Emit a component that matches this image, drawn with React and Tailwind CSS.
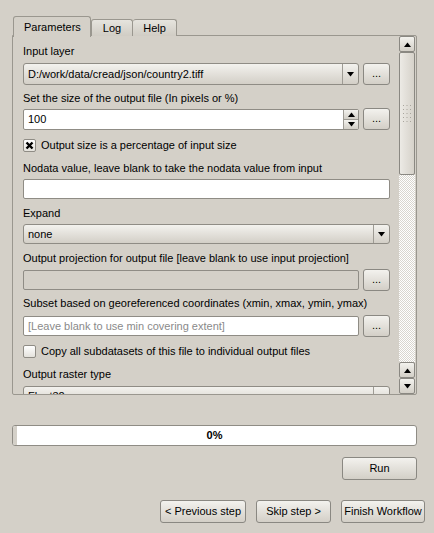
import React from "react";

const btnGrad = "bg-gradient-to-b from-[#f3f2ee] to-[#d3cfc7]";

function DownArrow() {
  return (
    <svg width="9" height="5" viewBox="0 0 9 5">
      <polygon points="1,0 8,0 4.5,4.5" fill="#000" />
    </svg>
  );
}

function UpArrow() {
  return (
    <svg width="9" height="5" viewBox="0 0 9 5">
      <polygon points="1,5 8,5 4.5,0.5" fill="#000" />
    </svg>
  );
}

function DotsButton() {
  return (
    <div
      className={`w-[27px] h-[22px] shrink-0 rounded-[3px] border border-[#8a8882] ${btnGrad} flex items-center justify-center leading-none pb-[2px]`}
    >
      ...
    </div>
  );
}

function Combo({ value, height = "h-[22px]" }) {
  return (
    <div
      className={`flex-1 ${height} flex rounded-[3px] border border-[#8f8c85] ${btnGrad}`}
    >
      <div className="flex-1 pl-[4px] flex items-center">{value}</div>
      <div className="w-[16px] border-l border-[#9e9b94] flex items-center justify-center">
        <DownArrow />
      </div>
    </div>
  );
}

function Label({ children, mt }) {
  return <div className={`h-[14px] leading-[14px] ${mt}`}>{children}</div>;
}

function Checkbox({ checked }) {
  return (
    <div className="w-[13px] h-[13px] rounded-[2px] border border-[#8f8c85] bg-gradient-to-b from-[#ffffff] to-[#e4e2dc] flex items-center justify-center">
      {checked && (
        <svg width="9" height="9" viewBox="0 0 9 9">
          <path d="M1.5 1.5 L7.5 7.5 M7.5 1.5 L1.5 7.5" stroke="#000" strokeWidth="2.4" />
        </svg>
      )}
    </div>
  );
}

function ScrollBtn({ up }) {
  return (
    <div
      className={`h-[16px] w-[16px] rounded-[2px] border border-[#8a8882] ${btnGrad} flex items-center justify-center`}
    >
      {up ? <UpArrow /> : <DownArrow />}
    </div>
  );
}

function Button({ children, w }) {
  return (
    <div
      className={`${w} h-[23px] rounded-[3px] border border-[#8a8882] ${btnGrad} flex items-center justify-center`}
    >
      {children}
    </div>
  );
}

export default function App() {
  return (
    <div className="w-[434px] h-[533px] bg-[#d4d0c8] text-[11px] text-black font-['Liberation_Sans',Arial,sans-serif] overflow-hidden">
      {/* tabs */}
      <div className="flex items-end pl-[13px] pt-[15px] h-[36px]">
        <div className="w-[78px] h-[21px] rounded-t-[3px] border border-b-0 border-[#9a978f] bg-[#d4d0c8] flex items-center pl-[10px] relative z-10 -mb-px">
          Parameters
        </div>
        <div className="w-[42px] h-[17px] rounded-t-[3px] border border-b-0 border-[#9a978f] bg-gradient-to-b from-[#e6e4de] to-[#d0ccc4] flex items-center justify-center">
          Log
        </div>
        <div className="w-[44px] h-[17px] rounded-t-[3px] border border-b-0 border-l-0 border-[#9a978f] bg-gradient-to-b from-[#e6e4de] to-[#d0ccc4] flex items-center justify-center">
          Help
        </div>
      </div>

      {/* panel */}
      <div className="ml-[12px] w-[405px] h-[360px] -mt-px border border-[#9a978f] rounded-b-[2px] rounded-tr-[2px] flex">
        <div className="flex-1 overflow-hidden pl-[10px] pr-[9px] flex flex-col">
          <Label mt="mt-[8px]">Input layer</Label>
          <div className="mt-[5px] flex gap-[4px] h-[22px] shrink-0">
            <Combo value="D:/work/data/cread/json/country2.tiff" />
            <DotsButton />
          </div>

          <Label mt="mt-[6px]">Set the size of the output file (In pixels or %)</Label>
          <div className="mt-[3px] flex gap-[4px] h-[22px] items-center shrink-0">
            <div className="flex-1 h-[21px] flex rounded-[2px] border border-[#8f8c85] bg-white">
              <div className="flex-1 pl-[4px] flex items-center">100</div>
              <div className="w-[15px] flex flex-col">
                <div className={`flex-1 border-l border-b border-[#9e9b94] ${btnGrad} flex items-center justify-center`}>
                  <UpArrow />
                </div>
                <div className={`flex-1 border-l border-[#9e9b94] ${btnGrad} flex items-center justify-center`}>
                  <DownArrow />
                </div>
              </div>
            </div>
            <DotsButton />
          </div>

          <div className="mt-[8px] h-[14px] flex items-center gap-[5px] shrink-0">
            <Checkbox checked />
            <span>Output size is a percentage of input size</span>
          </div>

          <Label mt="mt-[9px]">Nodata value, leave blank to take the nodata value from input</Label>
          <div className="mt-[4px] h-[20px] shrink-0 rounded-[2px] border border-[#8f8c85] bg-white" />

          <Label mt="mt-[7px]">Expand</Label>
          <div className="mt-[4px] flex h-[20px] shrink-0">
            <Combo value="none" height="h-[20px]" />
          </div>

          <Label mt="mt-[7px]">Output projection for output file [leave blank to use input projection]</Label>
          <div className="mt-[4px] flex gap-[4px] h-[22px] items-center shrink-0">
            <div className="flex-1 h-[20px] rounded-[2px] border border-[#8f8c85] bg-[#d4d0c8]" />
            <DotsButton />
          </div>

          <Label mt="mt-[5px]">Subset based on georeferenced coordinates (xmin, xmax, ymin, ymax)</Label>
          <div className="mt-[5px] flex gap-[4px] h-[22px] items-center shrink-0">
            <div className="flex-1 h-[20px] rounded-[2px] border border-[#8f8c85] bg-white pl-[4px] flex items-center text-[#8a8a8a]">
              [Leave blank to use min covering extent]
            </div>
            <DotsButton />
          </div>

          <div className="mt-[7px] h-[14px] flex items-center gap-[5px] shrink-0">
            <Checkbox />
            <span>Copy all subdatasets of this file to individual output files</span>
          </div>

          <Label mt="mt-[9px]">Output raster type</Label>
          <div className="mt-[5px] flex h-[20px] shrink-0">
            <Combo value="Float32" height="h-[20px]" />
          </div>
        </div>

        {/* scrollbar */}
        <div className="w-[16px] mr-[1px] flex flex-col">
          <ScrollBtn up />
          <div className="h-[123px] rounded-[2px] border border-[#8a8882] bg-gradient-to-r from-[#eceae5] to-[#d6d2ca] flex items-center justify-center">
            <svg width="10" height="18" viewBox="0 0 10 18">
              {[0, 4, 8, 12, 16].map((y) =>
                [1, 4.5, 8].map((x) => (
                  <rect key={`${x}-${y}`} x={x} y={y} width="1" height="1" fill="#a8a59d" />
                ))
              )}
            </svg>
          </div>
          <div className="flex-1 bg-[repeating-conic-gradient(#ffffff_0_25%,#d9d6cf_0_50%)] bg-[length:2px_2px]" />
          <ScrollBtn up />
          <ScrollBtn />
        </div>
      </div>

      {/* progress */}
      <div className="ml-[12px] mt-[30px] w-[405px] h-[21px] rounded-[3px] border border-[#8f8c85] bg-white flex items-center relative">
        <div className="absolute left-0 top-0 bottom-0 w-[4px] bg-[#d4d0c8] rounded-l-[2px]" />
        <div className="flex-1 text-center font-bold">0%</div>
      </div>

      <div className="mt-[11px] pr-[17px] flex justify-end">
        <Button w="w-[75px]">Run</Button>
      </div>

      <div className="mt-[20px] pr-[9px] flex justify-end gap-[10px]">
        <Button w="w-[86px]">&lt; Previous step</Button>
        <Button w="w-[75px]">Skip step &gt;</Button>
        <Button w="w-[84px]">Finish Workflow</Button>
      </div>
    </div>
  );
}
